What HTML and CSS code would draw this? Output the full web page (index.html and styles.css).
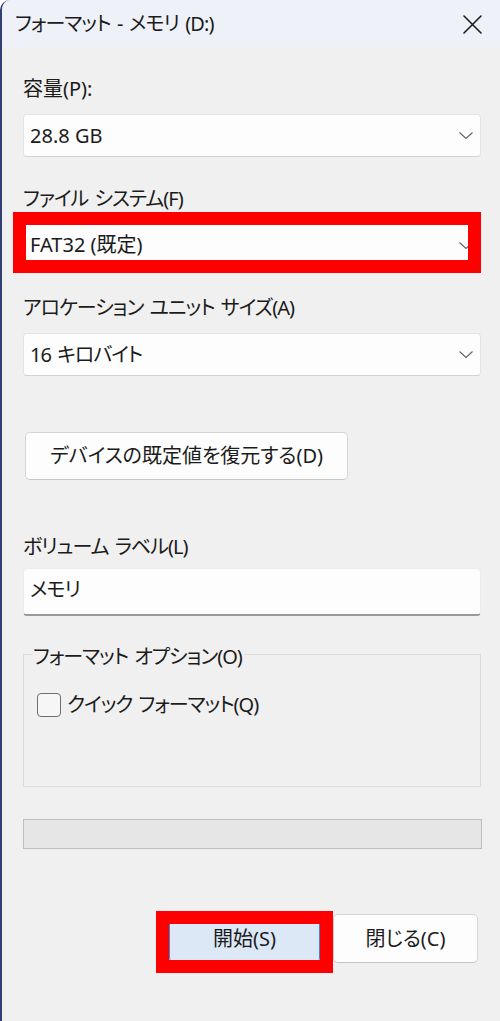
FILE: index.html
```html
<!DOCTYPE html>
<html lang="ja">
<head>
<meta charset="utf-8">
<title>フォーマット - メモリ (D:)</title>
<link rel="stylesheet" href="styles.css">
</head>
<body>
<div class="window">
  <header class="titlebar">
    <span class="title tight">フォーマット - メモリ (D:)</span>
    <svg class="close" viewBox="0 0 19 19" aria-label="閉じる">
      <path d="M1 1 L18 18 M18 1 L1 18" stroke="#1c1c1c" stroke-width="1.6" stroke-linecap="round" fill="none"/>
    </svg>
  </header>
  <main class="content">
    <div class="field">
      <div class="label">容量(P):</div>
      <div class="select"><span>28.8 GB</span><svg class="chev" viewBox="0 0 14 7"><polyline points="0.5,0.5 7,6.5 13.5,0.5" fill="none" stroke="#616161" stroke-width="1.1"/></svg></div>
    </div>
    <div class="field field-next">
      <div class="label tight">ファイル システム(F)</div>
      <div class="mark-wrap">
        <div class="select"><span>FAT32 (既定)</span><svg class="chev" viewBox="0 0 14 7"><polyline points="0.5,0.5 7,6.5 13.5,0.5" fill="none" stroke="#616161" stroke-width="1.1"/></svg></div>
        <span class="mark mark-fs"></span>
      </div>
    </div>
    <div class="field field-next">
      <div class="label tight">アロケーション ユニット サイズ(A)</div>
      <div class="select"><span class="tight">16 キロバイト</span><svg class="chev" viewBox="0 0 14 7"><polyline points="0.5,0.5 7,6.5 13.5,0.5" fill="none" stroke="#616161" stroke-width="1.1"/></svg></div>
    </div>
    <button class="btn btn-reset">デバイスの既定値を復元する(D)</button>
    <div class="field field-volume">
      <div class="label label-volume tight">ボリューム ラベル(L)</div>
      <div class="textbox"><span class="tight">メモリ</span></div>
    </div>
    <fieldset class="options">
      <legend class="tight">フォーマット オプション(O)</legend>
      <div class="check-row">
        <span class="checkbox"></span>
        <span class="check-label tight">クイック フォーマット(Q)</span>
      </div>
    </fieldset>
    <div class="progress"></div>
    <div class="actions">
      <div class="mark-wrap">
        <button class="btn btn-start">開始(S)</button>
        <span class="mark mark-start"></span>
      </div>
      <button class="btn btn-close">閉じる(C)</button>
    </div>
  </main>
</div>
</body>
</html>
```
FILE: styles.css
```css
* { box-sizing: border-box; }

body {
  margin: 0;
  background: #ffffff;
  font-family: "Noto Sans", "Noto Sans CJK JP", sans-serif;
  font-feature-settings: "palt";
  color: #1b1b1b;
}

.tight {
  letter-spacing: -1px;
  word-spacing: 2px;
}

.window {
  min-height: 1021px;
  border-left: 2px solid #343f72;
  border-top-left-radius: 10px;
  background: #f0f0f0;
  overflow: hidden;
  display: flex;
  flex-direction: column;
}

.titlebar {
  height: 48px;
  flex: none;
  background: #eef1f8;
  display: flex;
  align-items: center;
  justify-content: space-between;
  padding: 0 18px 0 13px;
}

.title {
  font-size: 20px;
  line-height: 24px;
}

.title.tight { letter-spacing: -0.9px; }

.close {
  width: 19px;
  height: 19px;
  display: block;
}

.content {
  display: flex;
  flex-direction: column;
  padding: 29px 19px 0 21px;
}

.label {
  font-size: 20px;
  line-height: 24px;
  margin-bottom: 13px;
}

.field-next { margin-top: 29.5px; }

.select {
  height: 43px;
  background: #fdfdfd;
  border: 1px solid #e3e3e3;
  border-bottom-color: #d2d2d2;
  border-radius: 4px;
  display: flex;
  align-items: center;
  justify-content: space-between;
  padding: 0 7px 0 6px;
  font-size: 20px;
  line-height: 24px;
}

.chev {
  width: 14px;
  height: 7px;
  display: block;
}

.mark-wrap {
  position: relative;
}

.mark {
  position: absolute;
  border: 13px solid #ff0000;
  pointer-events: none;
}

.mark-fs {
  top: -11.5px;
  bottom: -6.5px;
  left: -10px;
  right: 0;
}

.mark-start {
  top: -3px;
  bottom: -10px;
  left: -13px;
  right: -13px;
}

.btn {
  font-family: inherit;
  font-feature-settings: "palt";
  font-size: 20px;
  line-height: 24px;
  color: #1b1b1b;
  background: #fdfdfd;
  border: 1px solid #d6d6d6;
  border-bottom-color: #c4c4c4;
  border-radius: 5px;
  padding: 0;
  display: block;
}

.btn-reset {
  align-self: flex-start;
  margin: 56px 0 0 2px;
  width: 323px;
  height: 48px;
}

.field-volume { margin-top: 55px; }

.label-volume { margin-bottom: 9px; }

.textbox {
  height: 48px;
  background: #fdfdfd;
  border: 1px solid #ebebeb;
  border-bottom: 2px solid #9a9a9a;
  border-radius: 4px;
  padding: 0 0 3px 6px;
  display: flex;
  align-items: center;
  font-size: 20px;
  line-height: 24px;
}

.options {
  margin: 24px 0 0 0;
  border: 1px solid #dcdcdc;
  padding: 24px 13px 69px 13px;
  min-width: 0;
}

.options legend {
  margin-left: -5px;
  padding: 5px 2px 0 1px;
  font-size: 20px;
  line-height: 24px;
}

.check-row {
  display: flex;
  align-items: center;
  gap: 6px;
  height: 24px;
}

.checkbox {
  width: 24px;
  height: 24px;
  border: 1.5px solid #6e6e6e;
  border-radius: 4px;
  background: #f6f6f6;
  flex: none;
}

.check-label {
  font-size: 20px;
  line-height: 24px;
}

.progress {
  margin-top: 32px;
  height: 30px;
  margin-right: -1px;
  background: #e6e6e6;
  border: 1px solid #bdbdbd;
}

.actions {
  display: flex;
  justify-content: flex-end;
  gap: 13px;
  margin: 65px 3px 0 0;
}

.btn-start {
  width: 151px;
  height: 49px;
  background: #dce8f6;
  border: 1px solid #3d86da;
  border-radius: 5px;
}

.btn-close {
  width: 145px;
  height: 49px;
}
```
